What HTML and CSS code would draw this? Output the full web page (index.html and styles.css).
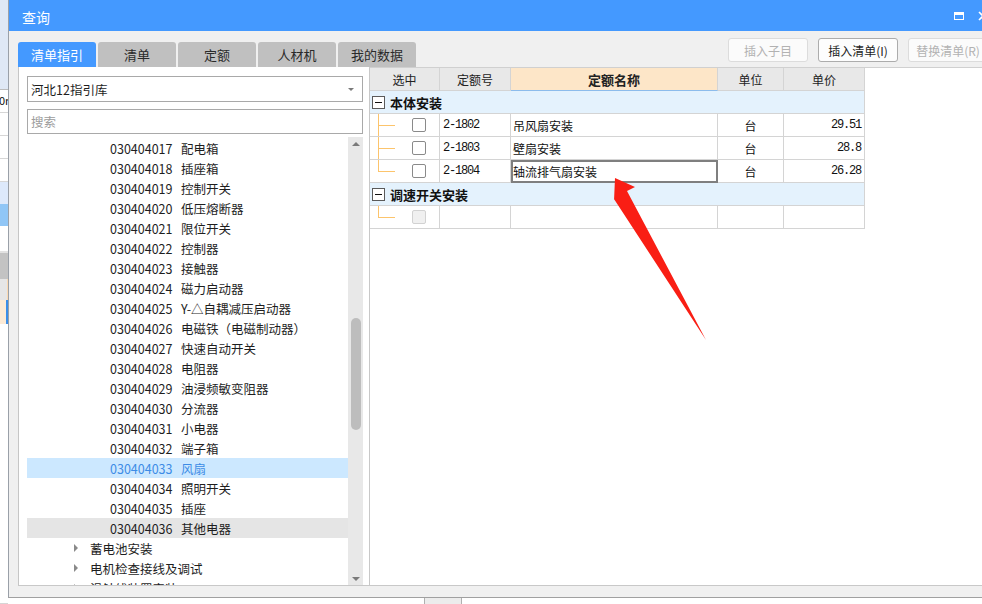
FILE: index.html
```html
<!DOCTYPE html>
<html lang="zh-CN">
<head>
<meta charset="utf-8">
<title>查询</title>
<link rel="stylesheet" href="styles.css">
</head>
<body>
<div class="screen">
  <div class="app-strip">
    <div class="as as-top"></div>
    <div class="as as-txt">0m</div>
    <div class="as as-w"></div>
    <div class="as as-w"></div>
    <div class="as as-w"></div>
    <div class="as as-lb"></div>
    <div class="as as-b"></div>
    <div class="as as-w2"></div>
    <div class="as as-g"></div>
    <div class="as as-lg"></div>
    <div class="as as-pe"></div>
    <div class="as as-rest"></div>
  </div>
  <div class="main">
    <div class="dialog">
      <div class="titlebar">
        <span class="title">查询</span>
        <span class="tb-icons">
          <span class="ic-max"></span>
          <svg class="ic-close" width="10" height="10" viewBox="0 0 10 10"><path d="M1 1 L9 9 M9 1 L1 9" stroke="#fff" stroke-width="1.6"/></svg>
        </span>
      </div>
      <div class="toolbar">
        <div class="tabs">
          <div class="tab active">清单指引</div>
          <div class="tab">清单</div>
          <div class="tab">定额</div>
          <div class="tab">人材机</div>
          <div class="tab">我的数据</div>
        </div>
        <div class="actions">
          <button class="btn" disabled>插入子目</button>
          <button class="btn">插入清单(I)</button>
          <button class="btn" disabled>替换清单(R)</button>
        </div>
      </div>
      <div class="content">
        <div class="left">
          <div class="select"><span>河北12指引库</span><span class="caret"></span></div>
          <div class="search">搜索</div>
          <div class="list">
            <div class="items">
              <div class="item"><span class="code">030404017</span><span>配电箱</span></div>
              <div class="item"><span class="code">030404018</span><span>插座箱</span></div>
              <div class="item"><span class="code">030404019</span><span>控制开关</span></div>
              <div class="item"><span class="code">030404020</span><span>低压熔断器</span></div>
              <div class="item"><span class="code">030404021</span><span>限位开关</span></div>
              <div class="item"><span class="code">030404022</span><span>控制器</span></div>
              <div class="item"><span class="code">030404023</span><span>接触器</span></div>
              <div class="item"><span class="code">030404024</span><span>磁力启动器</span></div>
              <div class="item"><span class="code">030404025</span><span>Y-△自耦减压启动器</span></div>
              <div class="item"><span class="code">030404026</span><span>电磁铁（电磁制动器）</span></div>
              <div class="item"><span class="code">030404027</span><span>快速自动开关</span></div>
              <div class="item"><span class="code">030404028</span><span>电阻器</span></div>
              <div class="item"><span class="code">030404029</span><span>油浸频敏变阻器</span></div>
              <div class="item"><span class="code">030404030</span><span>分流器</span></div>
              <div class="item"><span class="code">030404031</span><span>小电器</span></div>
              <div class="item"><span class="code">030404032</span><span>端子箱</span></div>
              <div class="item sel"><span class="code">030404033</span><span>风扇</span></div>
              <div class="item"><span class="code">030404034</span><span>照明开关</span></div>
              <div class="item"><span class="code">030404035</span><span>插座</span></div>
              <div class="item hov"><span class="code">030404036</span><span>其他电器</span></div>
              <div class="node"><span class="tri"></span><span>蓄电池安装</span></div>
              <div class="node"><span class="tri"></span><span>电机检查接线及调试</span></div>
              <div class="node"><span class="tri"></span><span>滑触线装置安装</span></div>
            </div>
            <div class="scrollbar">
              <span class="sb-up"></span>
              <span class="sb-thumb"></span>
              <span class="sb-down"></span>
            </div>
          </div>
        </div>
        <div class="right">
          <div class="grid">
            <div class="h">选中</div>
            <div class="h">定额号</div>
            <div class="h h-act">定额名称</div>
            <div class="h">单位</div>
            <div class="h">单价</div>

            <div class="grp"><span class="minus"></span><span>本体安装</span></div>

            <div class="c c-sel"><span class="cb"></span></div>
            <div class="c c-code">2-1802</div>
            <div class="c c-name">吊风扇安装</div>
            <div class="c c-unit">台</div>
            <div class="c c-price">29.51</div>

            <div class="c c-sel"><span class="cb"></span></div>
            <div class="c c-code">2-1803</div>
            <div class="c c-name">壁扇安装</div>
            <div class="c c-unit">台</div>
            <div class="c c-price">28.8</div>

            <div class="c c-sel last"><span class="cb"></span></div>
            <div class="c c-code">2-1804</div>
            <div class="c c-name focus">轴流排气扇安装</div>
            <div class="c c-unit">台</div>
            <div class="c c-price">26.28</div>

            <div class="grp"><span class="minus"></span><span>调速开关安装</span></div>

            <div class="c c-sel last"><span class="cb off"></span></div>
            <div class="c"></div>
            <div class="c"></div>
            <div class="c"></div>
            <div class="c"></div>
          </div>
        </div>
      </div>
    </div>
    <div class="below"><div class="below-box"></div></div>
  </div>
</div>
<svg class="arrow" width="982" height="604" viewBox="0 0 982 604">
  <polygon points="615,178 635,187 627,191 706,340 614,199 614,201" fill="#f91e14"/>
</svg>
</body>
</html>
```

FILE: styles.css
```css
* { box-sizing: border-box; }
html, body { margin: 0; padding: 0; }
body {
  width: 982px;
  height: 604px;
  overflow: hidden;
  position: relative;
  background: #fff;
  font-family: "Noto Sans CJK SC", "Noto Sans", sans-serif;
  font-size: 12px;
  color: #1e1e1e;
}
.screen { display: flex; height: 604px; }

/* background application strip */
.app-strip { width: 8px; flex: none; display: flex; flex-direction: column; overflow: hidden; background: #fff; }
.as { flex: none; }
.as-top { height: 90px; background: #dfe8f5; border-bottom: 1px solid #bcbcbc; }
.as-txt { height: 23px; font-size: 11px; line-height: 20px; text-indent: -1px; color: #111; border-bottom: 1px solid #d6d6d6; overflow: hidden; white-space: nowrap; }
.as-w { height: 23px; border-bottom: 1px solid #d6d6d6; }
.as-lb { height: 22px; background: #dde9fb; }
.as-b { height: 22px; background: #90c6f6; }
.as-w2 { height: 27px; border-bottom: 2px solid #e2e2e2; }
.as-g { height: 26px; background: #c3c3c3; }
.as-lg { height: 21px; background: #e6e6e6; border-right: 1px solid #fbd9b3; }
.as-pe { height: 24px; background: #fdebd6; border-right: 2px solid #3d8fe8; }
.as-rest { flex: 1; border-bottom: 1px solid #d6d6d6; }

.main { width: 974px; flex: none; display: flex; flex-direction: column; }
.dialog {
  height: 598px;
  flex: none;
  border-left: 1px solid #9aa0a8;
  border-bottom: 1px solid #a0a0a0;
  background: #f0f0f0;
  display: flex;
  flex-direction: column;
  overflow: hidden;
}

/* title bar */
.titlebar {
  height: 31px;
  flex: none;
  background: #4499ff;
  color: #fff;
  display: flex;
  align-items: center;
  padding: 3px 0 0 13px;
  overflow: hidden;
}
.title { font-size: 14px; }
.tb-icons { margin-left: auto; margin-right: -6px; display: flex; align-items: center; gap: 14px; margin-top: -3px; }
.ic-max { width: 10px; height: 8px; border: 1.5px solid #fff; border-top-width: 3px; }
.ic-close { display: block; }

/* toolbar: tabs and action buttons */
.toolbar { height: 36px; flex: none; display: flex; overflow: hidden; }
.tabs { display: flex; gap: 2px; padding-left: 9px; align-self: flex-end; }
.tab {
  width: 78px;
  height: 25px;
  background: #c0c0c0;
  border-radius: 3px 3px 0 0;
  font-size: 13px;
  color: #2a2a2a;
  display: flex;
  align-items: center;
  justify-content: center;
}
.tab.active { background: #4499ff; color: #fff; }
.actions { margin-left: auto; margin-right: -6px; margin-top: 7px; display: flex; gap: 10px; align-self: flex-start; }
.btn {
  width: 80px;
  height: 24px;
  padding: 0;
  border: 1px solid #acacac;
  border-radius: 3px;
  background: #fdfdfd;
  font-family: "Noto Sans CJK SC", "Noto Sans", sans-serif;
  font-size: 12px;
  color: #1e1e1e;
}
.btn:disabled { border-color: #dcdcdc; color: #b2b2b2; background: #fbfbfb; }

/* content */
.content { height: 519px; flex: none; display: flex; padding-left: 9px; }
.left {
  width: 351px;
  flex: none;
  background: #fff;
  border-left: 1px solid #c6c6c6;
  border-bottom: 1px solid #c8c8c8;
  padding: 9px 6px 0 8px;
  display: flex;
  flex-direction: column;
}
.select {
  height: 26px;
  flex: none;
  border: 1px solid #a9a9a9;
  padding: 0 6px 0 3px;
  font-size: 12.5px;
  display: flex;
  align-items: center;
  justify-content: space-between;
}
.caret { width: 0; height: 0; border-left: 3px solid transparent; border-right: 3px solid transparent; border-top: 3px solid #7a7a7a; margin-right: 2px; }
.search {
  height: 25px;
  flex: none;
  margin-top: 7px;
  border: 1px solid #a9a9a9;
  padding-left: 3px;
  font-size: 12.5px;
  color: #9c9c9c;
  display: flex;
  align-items: center;
}
.list { margin-top: 3px; flex: 1; display: flex; overflow: hidden; }
.items { flex: 1; padding-top: 1px; overflow: hidden; }
.item, .node {
  height: 20px;
  display: flex;
  align-items: center;
  font-size: 12.5px;
  color: #1e1e1e;
  white-space: nowrap;
}
.item { padding-left: 83px; }
.code { width: 71px; flex: none; }
.item.sel { background: #cce8ff; color: #3d8ce6; }
.item.hov { background: #e5e5e5; }
.node { padding-left: 47px; }
.tri { width: 0; height: 0; border-top: 4px solid transparent; border-bottom: 4px solid transparent; border-left: 4px solid #8a8a8a; margin-right: 12px; }
.scrollbar {
  width: 15px;
  flex: none;
  background: #e8e8e8;
  display: flex;
  flex-direction: column;
  align-items: center;
}
.sb-up { margin-top: 5px; width: 0; height: 0; border-left: 4px solid transparent; border-right: 4px solid transparent; border-bottom: 4px solid #7a7a7a; }
.sb-thumb { margin-top: 172px; width: 10px; height: 112px; border-radius: 5px; background: #bdbdbd; }
.sb-down { margin-top: auto; margin-bottom: 4px; width: 0; height: 0; border-left: 4px solid transparent; border-right: 4px solid transparent; border-top: 4px solid #7a7a7a; }

.right {
  flex: 1;
  background: #fff;
  border-left: 1px solid #c8c8c8;
  border-top: 1px solid #d0d0d0;
  border-bottom: 1px solid #c8c8c8;
}

/* table */
.grid {
  display: grid;
  grid-template-columns: 70px 71px 207px 66px 81px;
  grid-auto-rows: 23px;
  width: 495px;
}
.h, .c, .grp { border-right: 1px solid #d4d4d4; border-bottom: 1px solid #d4d4d4; }
.h {
  background: #e8e8e8;
  font-size: 12px;
  color: #222;
  display: flex;
  align-items: center;
  justify-content: center;
}
.h-act { background: #fde6c8; font-weight: bold; font-size: 13px; border-bottom-color: #8cbcec; }
.grp {
  grid-column: 1 / -1;
  background: #e4f2fd;
  display: flex;
  align-items: center;
  font-weight: bold;
  font-size: 13px;
  color: #111;
}
.minus {
  width: 13px;
  height: 13px;
  margin: 0 5px 0 2px;
  border: 1px solid #5a5a5a;
  background: #fff;
  display: flex;
  align-items: center;
  justify-content: center;
}
.minus::before { content: ""; width: 7px; height: 1px; background: #111; }
.c { display: flex; align-items: center; font-size: 12px; color: #111; white-space: nowrap; }
.c-sel { position: relative; padding-left: 42px; }
.c-sel::before { content: ""; position: absolute; left: 8px; top: 0; bottom: 0; width: 1px; background: #fcc46c; }
.c-sel.last::before { bottom: 11px; }
.c-sel::after { content: ""; position: absolute; left: 8px; top: 11px; width: 17px; height: 1px; background: #fcc46c; }
.cb { width: 14px; height: 14px; border: 1px solid #8a8a8a; border-radius: 2px; background: #fff; }
.cb.off { border-color: #d2d2d2; background: #f0f0f0; }
.c-code, .c-price { font-family: "Liberation Mono", "DejaVu Sans Mono", monospace; letter-spacing: -1.2px; }
.c-code { padding-left: 3px; }
.c-name { padding-left: 2px; }
.c-unit { justify-content: center; }
.c-price { justify-content: flex-end; padding-right: 3px; }
.focus { outline: 2px solid #7f7f7f; outline-offset: -2px; }

.below { flex: 1; background: #fff; padding-left: 416px; }
.below-box { width: 38px; height: 100%; background: #ececec; border-left: 1px solid #b0b0b0; border-right: 1px solid #b0b0b0; }

.arrow { position: absolute; left: 0; top: 0; pointer-events: none; }
```
